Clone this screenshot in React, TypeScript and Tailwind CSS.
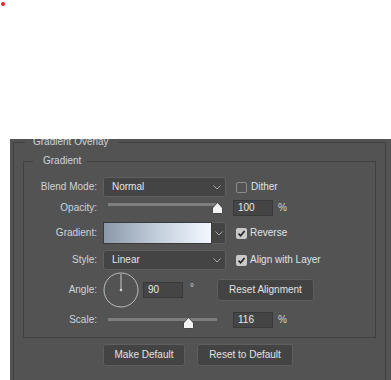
import React from "react";

function Chevron() {
  return (
    <svg width="8" height="5" viewBox="0 0 8 5" className="shrink-0">
      <path d="M0.5 0.5 L4 4 L7.5 0.5" fill="none" stroke="#a8a8a8" strokeWidth="1" />
    </svg>
  );
}

function Dropdown({ value }: { value: string }) {
  return (
    <div className="w-[123px] h-[20px] rounded-[3px] border border-[#5f5f5f] bg-[#444444] flex items-center justify-between pl-[8px] pr-[4px]">
      <span className="text-[#e4e4e4]">{value}</span>
      <Chevron />
    </div>
  );
}

function CheckBox({ checked }: { checked: boolean }) {
  if (!checked) {
    return <div className="w-[11px] h-[11px] rounded-[2px] border border-[#8c8c8c] shrink-0" />;
  }
  return (
    <div className="w-[11px] h-[11px] rounded-[2px] bg-[#c9c9c9] flex items-center justify-center shrink-0">
      <svg width="9" height="9" viewBox="0 0 9 9">
        <path d="M1.5 4.6 L3.6 6.8 L7.6 2" fill="none" stroke="#262626" strokeWidth="1.7" />
      </svg>
    </div>
  );
}

function Thumb() {
  return (
    <svg width="11" height="12" viewBox="0 0 11 12">
      <path
        d="M5.5 0.5 L10.5 6 L10.5 10.5 Q10.5 11.5 9.5 11.5 L1.5 11.5 Q0.5 11.5 0.5 10.5 L0.5 6 Z"
        fill="#f4f4f4"
        stroke="#2e2e2e"
        strokeWidth="0.8"
      />
    </svg>
  );
}

function Slider({ pos }: { pos: number }) {
  return (
    <div className="w-[123px] h-[12px] relative">
      <div className="absolute left-[5px] top-[1px] w-[109px] h-[3px] bg-[#7e7e7e]" />
      <div className="absolute top-0" style={{ left: pos - 5.5 }}>
        <Thumb />
      </div>
    </div>
  );
}

function NumInput({ value }: { value: string }) {
  return (
    <div className="w-[40px] h-[16px] border border-[#393939] bg-[#454545] flex items-center pl-[4px] text-[#e8e8e8]">
      {value}
    </div>
  );
}

function Label({ children }: { children: React.ReactNode }) {
  return <div className="w-[73px] text-right pr-0 text-[#cdd3dc] mr-[6px] shrink-0">{children}</div>;
}

function Button({ children, w }: { children: React.ReactNode; w: string }) {
  return (
    <div className={`${w} h-[22px] rounded-[3px] border border-[#5e5e5e] bg-[#434343] flex items-center justify-center text-[#e2e2e2]`}>
      {children}
    </div>
  );
}

export default function App() {
  return (
    <div className="w-[391px] h-[380px] bg-white overflow-hidden font-['Liberation_Sans',Arial,sans-serif] text-[10px] leading-[12px]">
      <div className="pt-[2px] pl-[1px]">
        <div className="w-[4px] h-[4px] rounded-full bg-[#e8202a]" />
      </div>
      <div className="mt-[133px] ml-[10px] h-[241px] bg-[#535353] overflow-hidden pl-[3px] pr-[5px]">
        <fieldset className="-mt-[3px] border border-[#414141] w-[373px]">
          <legend className="ml-[11px] px-[8px] leading-[12px] text-[#cdd3dc]">Gradient Overlay</legend>
          <div className="px-[9px] pb-[30px]">
            <fieldset className="mt-[7px] border border-[#414141]">
              <legend className="ml-[9px] pl-[10px] pr-[6px] leading-[12px] text-[#cdd3dc]">Gradient</legend>
              <div className="flex flex-col pb-[7px]">
                {/* Blend Mode */}
                <div className="mt-[10px] h-[20px] flex items-center">
                  <Label>Blend Mode:</Label>
                  <Dropdown value="Normal" />
                  <div className="ml-[10px]"><CheckBox checked={false} /></div>
                  <span className="ml-[4px] text-[#dde3ec]">Dither</span>
                </div>
                {/* Opacity */}
                <div className="h-[22px] flex items-center">
                  <Label>Opacity:</Label>
                  <Slider pos={114} />
                  <div className="ml-[7px]"><NumInput value="100" /></div>
                  <span className="ml-[5px] text-[#cdd3dc]">%</span>
                </div>
                {/* Gradient */}
                <div className="mt-[3px] h-[22px] flex items-center">
                  <Label>Gradient:</Label>
                  <div className="w-[123px] h-[22px] flex">
                    <div className="w-[109px] h-[22px] border border-[#3a3a3a] bg-[linear-gradient(90deg,#8b98a9_0%,#c3cfdd_50%,#f3f8ff_100%)]" />
                    <div className="w-[14px] h-[22px] border border-l-0 border-[#5f5f5f] bg-[#444444] rounded-r-[3px] flex items-center justify-center">
                      <Chevron />
                    </div>
                  </div>
                  <div className="ml-[10px]"><CheckBox checked={true} /></div>
                  <span className="ml-[3px] text-[#dde3ec]">Reverse</span>
                </div>
                {/* Style */}
                <div className="mt-[6px] h-[20px] flex items-center">
                  <Label>Style:</Label>
                  <Dropdown value="Linear" />
                  <div className="ml-[10px]"><CheckBox checked={true} /></div>
                  <span className="ml-[3px] text-[#dde3ec]">Align with Layer</span>
                </div>
                {/* Angle */}
                <div className="mt-[3px] h-[34px] flex items-center">
                  <Label>Angle:</Label>
                  <svg width="36" height="36" viewBox="0 0 36 36" className="ml-[0px] shrink-0">
                    <circle cx="18" cy="18" r="17" fill="none" stroke="#bdbdbd" strokeWidth="1" />
                    <line x1="18" y1="2" x2="18" y2="18" stroke="#c8c8c8" strokeWidth="1" />
                    <circle cx="18" cy="18" r="1.3" fill="#d0d0d0" />
                  </svg>
                  <div className="ml-[4px]"><NumInput value="90" /></div>
                  <span className="ml-[7px] -mt-[4px] text-[#cdd3dc]">°</span>
                  <div className="ml-[23px]">
                    <Button w="w-[97px]">Reset Alignment</Button>
                  </div>
                </div>
                {/* Scale */}
                <div className="mt-[3px] h-[20px] flex items-center">
                  <Label>Scale:</Label>
                  <div className="mt-[6px]"><Slider pos={85} /></div>
                  <div className="ml-[7px]"><NumInput value="116" /></div>
                  <span className="ml-[5px] text-[#cdd3dc]">%</span>
                </div>
              </div>
            </fieldset>
            <div className="mt-[6px] ml-[80px] flex gap-[12px]">
              <Button w="w-[82px]">Make Default</Button>
              <Button w="w-[96px]">Reset to Default</Button>
            </div>
          </div>
        </fieldset>
      </div>
    </div>
  );
}
